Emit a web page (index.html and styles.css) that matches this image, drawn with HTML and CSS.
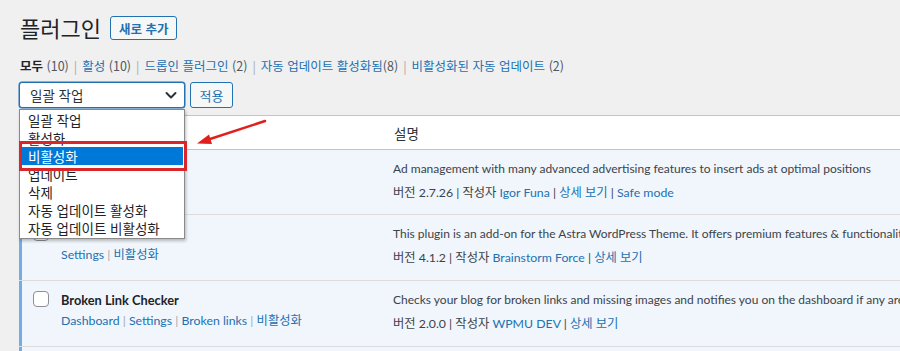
FILE: index.html
```html
<!DOCTYPE html>
<html lang="ko">
<head>
<meta charset="utf-8">
<title>플러그인</title>
<link rel="stylesheet" href="styles.css">
</head>
<body>
<div class="wrap">
  <div class="heading">
    <h1 class="title">플러그인</h1>
    <a class="add-new">새로 추가</a>
  </div>
  <ul class="subsubsub">
    <li class="current">모두 <span class="count">(10)</span></li>
    <li class="sep">|</li>
    <li><a>활성</a> <span class="count">(10)</span></li>
    <li class="sep">|</li>
    <li><a>드롭인 플러그인</a> <span class="count">(2)</span></li>
    <li class="sep">|</li>
    <li><a>자동 업데이트 활성화됨</a><span class="count">(8)</span></li>
    <li class="sep">|</li>
    <li><a>비활성화된 자동 업데이트</a> <span class="count">(2)</span></li>
  </ul>
  <div class="tablenav">
    <div class="select">
      <span>일괄 작업</span>
      <svg class="chev" width="14" height="14" viewBox="0 0 14 14"><path d="M2.5 5 L7 9.5 L11.5 5" fill="none" stroke="#2c3338" stroke-width="2" stroke-linecap="round" stroke-linejoin="round"/></svg>
    </div>
    <button class="apply">적용</button>
    <ul class="dropdown">
      <li>일괄 작업</li>
      <li>활성화</li>
      <li class="hl">비활성화</li>
      <li>업데이트</li>
      <li>삭제</li>
      <li>자동 업데이트 활성화</li>
      <li>자동 업데이트 비활성화</li>
    </ul>
    <div class="redbox"></div>
    <svg class="arrow" width="80" height="32" viewBox="0 0 80 32">
      <line x1="72" y1="2" x2="14" y2="21" stroke="#e0201e" stroke-width="2.5" stroke-linecap="round"/>
      <polygon points="4,24.5 16,15.5 19,25" fill="#e0201e"/>
    </svg>
  </div>
  <div class="table">
    <div class="thead">
      <div class="c-check"></div>
      <div class="c-name"></div>
      <div class="c-desc">설명</div>
    </div>
    <div class="row first">
      <div class="c-check"><span class="cb"></span></div>
      <div class="c-name"><div class="pname">Ad Inserter</div><div class="actions"><a>Settings</a> | <a>비활성화</a></div></div>
      <div class="c-desc"><p class="desc">Ad management with many advanced advertising features to insert ads at optimal positions</p><p class="meta">버전 2.7.26 | 작성자 <a>Igor Funa</a> | <a>상세 보기</a> | <a>Safe mode</a></p></div>
    </div>
    <div class="row">
      <div class="c-check"><span class="cb"></span></div>
      <div class="c-name"><div class="pname">Astra Pro</div><div class="actions"><a>Settings</a> | <a>비활성화</a></div></div>
      <div class="c-desc"><p class="desc">This plugin is an add-on for the Astra WordPress Theme. It offers premium features &amp; functionalities that enhance your theming experience at next level.</p><p class="meta">버전 4.1.2 | 작성자 <a>Brainstorm Force</a> | <a>상세 보기</a></p></div>
    </div>
    <div class="row">
      <div class="c-check"><span class="cb"></span></div>
      <div class="c-name"><div class="pname">Broken Link Checker</div><div class="actions"><a>Dashboard</a> | <a>Settings</a> | <a>Broken links</a> | <a>비활성화</a></div></div>
      <div class="c-desc"><p class="desc">Checks your blog for broken links and missing images and notifies you on the dashboard if any are found.</p><p class="meta">버전 2.0.0 | 작성자 <a>WPMU DEV</a> | <a>상세 보기</a></p></div>
    </div>
    <div class="row">
      <div class="c-check"><span class="cb"></span></div>
      <div class="c-name"><div class="pname">Classic Editor</div></div>
      <div class="c-desc"><p class="desc">Enables the previous "classic" editor.</p></div>
    </div>
  </div>
</div>
</body>
</html>
```
FILE: styles.css
```css
html, body {
  margin: 0;
  padding: 0;
  background: #f0f0f1;
  overflow: hidden;
  height: 351px;
}
body {
  font-family: "Noto Sans CJK KR", sans-serif;
  font-size: 13px;
  color: #3c434a;
}
a { color: #2271b1; text-decoration: none; }
.wrap {
  position: relative;
  padding: 12px 0 0 19px;
  width: 1000px;
}
.heading {
  display: flex;
  align-items: center;
  gap: 9px;
  height: 30px;
}
.title {
  margin: 0 0 0 1px;
  font-size: 22px;
  font-weight: 400;
  color: #1d2327;
  line-height: 30px;
}
.add-new {
  display: inline-flex;
  align-items: center;
  height: 22px;
  padding: 0 8px;
  border: 1px solid #2271b1;
  border-radius: 3px;
  background: #f6f7f7;
  font-size: 12.5px;
  font-weight: 600;
  color: #2271b1;
  margin-top: 2px;
}
.subsubsub {
  list-style: none;
  margin: 14px 0 0 1px;
  padding: 0;
  display: flex;
  gap: 5px;
  height: 18px;
  align-items: center;
  font-size: 12.5px;
}
.subsubsub .current { color: #1d2327; font-weight: 700; }
.subsubsub .count { color: #50575e; font-weight: 400; }
.subsubsub .sep { color: #a7aaad; }
.tablenav {
  position: relative;
  display: flex;
  gap: 5px;
  margin-top: 8px;
  height: 26px;
}
.select {
  box-sizing: border-box;
  width: 166px;
  height: 26px;
  border: 1px solid #2271b1;
  box-shadow: 0 0 0 0.5px #2271b1;
  border-radius: 3px;
  background: #fff;
  display: flex;
  align-items: center;
  justify-content: space-between;
  padding: 0 6px 0 10px;
  font-size: 13.5px;
  color: #2c3338;
}
.apply {
  box-sizing: border-box;
  width: 43px;
  height: 26px;
  border: 1px solid #2271b1;
  border-radius: 3px;
  background: #f6f7f7;
  color: #2271b1;
  font-family: "Noto Sans CJK KR", sans-serif;
  font-size: 13px;
  padding: 0;
}
.dropdown {
  position: absolute;
  left: 0;
  top: 27px;
  z-index: 5;
  box-sizing: border-box;
  width: 166px;
  margin: 0;
  padding: 1px 0 1px;
  list-style: none;
  background: #fff;
  border: 1px solid #8a8a8a;
  box-shadow: 1px 2px 3px rgba(0,0,0,0.25);
  font-size: 13.5px;
  color: #1d2327;
}
.dropdown li {
  height: 18px;
  line-height: 18px;
  padding-left: 8px;
}
.dropdown li.hl {
  background: #0078d7;
  color: #fff;
  margin: 0 1px 0 2px;
  padding-left: 6px;
}
.redbox {
  position: absolute;
  left: 0;
  top: 59px;
  width: 162px;
  height: 24px;
  border: 3px solid #d8262b;
  z-index: 6;
}
.arrow {
  position: absolute;
  left: 174px;
  top: 37px;
  z-index: 6;
}
.table {
  margin-top: 7px;
  border-top: 1px solid #c3c4c7;
  background: #fff;
}
.thead, .row {
  display: grid;
  grid-template-columns: 32px 332px 1fr;
}
.thead {
  height: 33px;
  border-bottom: 1px solid #c3c4c7;
  align-items: center;
  font-size: 13.5px;
  color: #2c3338;
}
.thead .c-desc { padding-left: 11px; }
.row {
  height: 66px;
  background: #f0f6fc;
  border-bottom: 1px solid #dcdcde;
  box-sizing: border-box;
}
.row.first { height: 65px; }
.row .c-check {
  border-left: 3px solid #72aee6;
  padding: 10px 0 0 11px;
}
.cb {
  display: block;
  box-sizing: border-box;
  width: 16px;
  height: 16px;
  border: 1px solid #8c8f94;
  border-radius: 4px;
  background: #fff;
}
.c-name {
  padding: 10px 10px 0 10px;
  font-family: Lato, "Noto Sans CJK KR", sans-serif;
}
.pname {
  font-weight: 700;
  font-size: 12.8px;
  color: #1d2327;
  line-height: 18px;
}
.actions {
  margin-top: 2px;
  line-height: 20px;
  font-size: 12.3px;
  color: #a7aaad;
}
.c-desc {
  padding: 9px 0 0 10px;
  overflow: hidden;
  font-family: Lato, "Noto Sans CJK KR", sans-serif;
}
.thead .c-desc { font-family: "Noto Sans CJK KR", sans-serif; padding-top: 0; }
.desc {
  margin: 0;
  white-space: nowrap;
  line-height: 20px;
  font-size: 12px;
}
.meta {
  margin: 4px 0 0;
  line-height: 20px;
  white-space: nowrap;
  font-size: 12.3px;
}
```
